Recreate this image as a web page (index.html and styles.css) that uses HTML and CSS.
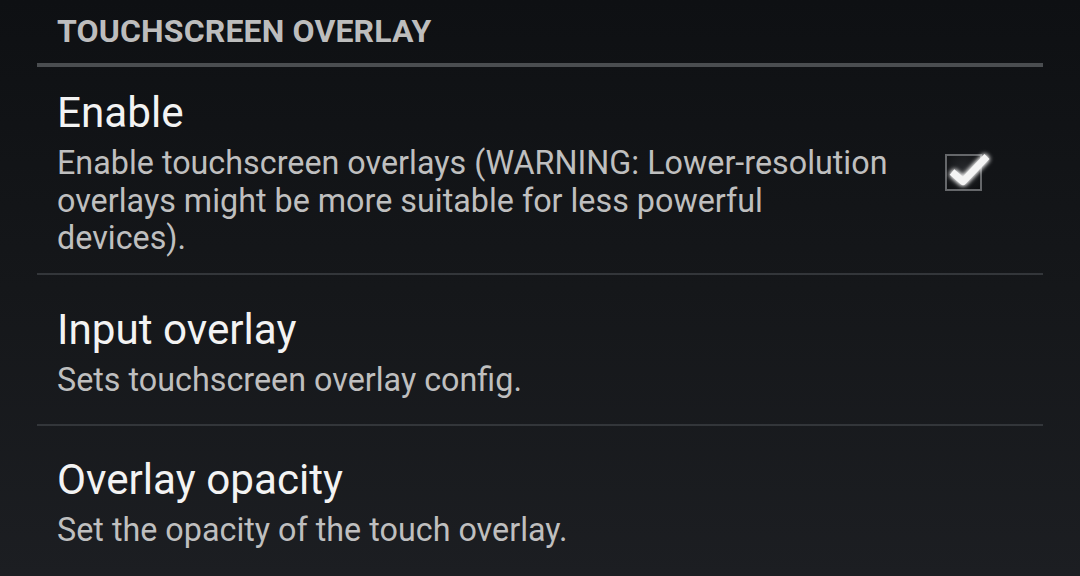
FILE: index.html
```html
<!DOCTYPE html>
<html>
<head>
<meta charset="utf-8">
<link rel="stylesheet" href="styles.css">
</head>
<body>
<div class="screen">
  <div class="header">TOUCHSCREEN OVERLAY</div>
  <div class="header-rule"></div>
  <div class="pref pref-first">
    <div class="text">
      <div class="title">Enable</div>
      <div class="summary">Enable touchscreen overlays (WARNING: Lower-resolution overlays might be more suitable for less powerful devices).</div>
    </div>
    <div class="checkbox">
      <svg class="check" width="52" height="44" viewBox="0 0 52 44">
        <defs>
          <filter id="glow" x="-40%" y="-40%" width="180%" height="180%">
            <feGaussianBlur stdDeviation="2.5" result="b"/>
            <feMerge><feMergeNode in="b"/><feMergeNode in="b"/><feMergeNode in="SourceGraphic"/></feMerge>
          </filter>
        </defs>
        <path d="M9 22 L20 31.5 L44 6.5" fill="none" stroke="#f4f4f4" stroke-width="7" stroke-linejoin="round" stroke-linecap="butt" filter="url(#glow)"/>
      </svg>
    </div>
  </div>
  <div class="pref">
    <div class="text">
      <div class="title">Input overlay</div>
      <div class="summary">Sets touchscreen overlay config.</div>
    </div>
  </div>
  <div class="pref pref-last">
    <div class="text">
      <div class="title">Overlay opacity</div>
      <div class="summary">Set the opacity of the touch overlay.</div>
    </div>
  </div>
</div>
</body>
</html>
```

FILE: styles.css
```css
html, body {
  margin: 0;
  padding: 0;
}
body {
  width: 1080px;
  height: 576px;
  overflow: hidden;
  background: linear-gradient(180deg, #0e1013 0%, #15171a 50%, #1c1e22 100%);
  font-family: Roboto, "Noto Sans", sans-serif;
}
.screen {
  padding: 11px 37px 0;
}
.header {
  padding-left: 20px;
  font-weight: 700;
  font-size: 32px;
  line-height: 40px;
  letter-spacing: 0.15px;
  color: #bdbdbd;
}
.header-rule {
  margin-top: 12px;
  height: 4px;
  background: #4a4d50;
}
.pref {
  display: flex;
  align-items: center;
  padding: 30px 20px 25px;
  border-bottom: 2px solid #33363a;
}
.pref-first {
  padding-top: 21px;
  padding-bottom: 15px;
}
.pref-last {
  padding-top: 29px;
  border-bottom: none;
}
.text {
  flex: 1;
  min-width: 0;
}
.title {
  font-size: 42.2px;
  line-height: 50px;
  color: #f3f3f3;
}
.summary {
  margin-top: 7px;
  font-size: 32.3px;
  line-height: 37.5px;
  color: #bfbfbf;
}
.checkbox {
  position: relative;
  flex: none;
  width: 33px;
  height: 33px;
  margin-left: 52px;
  margin-right: 41px;
  border: 2px solid #65676a;
  background: radial-gradient(circle at 50% 40%, rgba(60, 62, 66, 0.5), rgba(0, 0, 0, 0.3));
}
.check {
  position: absolute;
  left: -4px;
  top: -6px;
  overflow: visible;
}
```
